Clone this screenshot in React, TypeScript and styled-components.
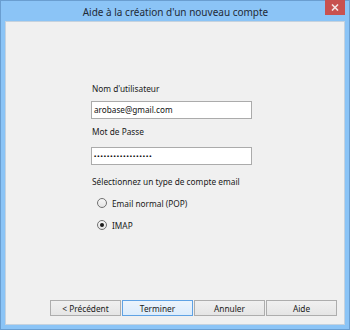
import React from "react";
import styled, { createGlobalStyle } from "styled-components";

const Global = createGlobalStyle`
  html, body { margin: 0; padding: 0; background: #ffffff; }
  * { box-sizing: border-box; }
`;

const Window = styled.div`
  width: 350px;
  height: 330px;
  border: 1px solid #6a9ed0;
  background: #8bc4f6;
  display: flex;
  flex-direction: column;
  font-family: "Noto Sans", "Open Sans", sans-serif;
`;

const TitleBar = styled.div`
  height: 20px;
  position: relative;
  display: flex;
  align-items: center;
  justify-content: center;
`;

const Title = styled.div`
  font-size: 10px;
  color: #1f2a36;
  line-height: 20px;
  margin-left: 1px;
  margin-top: 1px;
`;

const CloseButton = styled.div`
  position: absolute;
  top: -1px;
  right: 4px;
  width: 20px;
  height: 15px;
  background: #c8514f;
  display: flex;
  align-items: center;
  justify-content: center;
`;

const Content = styled.div`
  flex: 1;
  margin: 0 4px 4px 4px;
  background: #f0f0f0;
  border: 1px solid #c5d2de;
  display: flex;
  flex-direction: column;
  padding: 61px 7px 8px 85px;
`;

const Form = styled.div`
  display: flex;
  flex-direction: column;
  width: 161px;
`;

const Label = styled.div<{ $gap: number }>`
  font-size: 8.3px;
  line-height: 12px;
  height: 12px;
  color: #1a1a1a;
  margin-left: 1px;
  margin-top: ${(p) => p.$gap}px;
  white-space: nowrap;
`;

const Field = styled.div<{ $gap: number; $dots?: boolean }>`
  height: 18px;
  width: 161px;
  background: #ffffff;
  border: 1px solid #ababab;
  margin-top: ${(p) => p.$gap}px;
  padding-left: 2px;
  font-size: ${(p) => (p.$dots ? "6px" : "8.2px")};
  font-weight: ${(p) => (p.$dots ? 700 : 400)};
  letter-spacing: ${(p) => (p.$dots ? "1px" : "0")};
  line-height: 16px;
  color: #111;
  white-space: nowrap;
  overflow: hidden;
`;

const RadioRow = styled.div<{ $gap: number }>`
  display: flex;
  align-items: center;
  height: 14px;
  margin-top: ${(p) => p.$gap}px;
  padding-left: 6px;
  gap: 5px;
  font-size: 8.3px;
  color: #1a1a1a;
`;

const RadioCircle = styled.span<{ $checked?: boolean }>`
  width: 10px;
  height: 10px;
  border-radius: 50%;
  border: 1px solid #707070;
  background: linear-gradient(#f6f6f6, #e4e4e4);
  display: flex;
  align-items: center;
  justify-content: center;
  &::after {
    content: "";
    width: 4px;
    height: 4px;
    border-radius: 50%;
    background: ${(p) => (p.$checked ? "#1b1b1b" : "transparent")};
  }
`;

const ButtonRow = styled.div`
  margin-top: auto;
  display: flex;
  justify-content: flex-end;
  gap: 1px;
  margin-right: 0;
  margin-left: -42px;
`;

const Button = styled.div<{ $default?: boolean }>`
  width: 71px;
  height: 16px;
  border: 1px solid ${(p) => (p.$default ? "#5fa2e4" : "#adadad")};
  background: ${(p) =>
    p.$default
      ? "linear-gradient(#ecf4fc, #dcecfc)"
      : "linear-gradient(#f0f0f0, #e5e5e5)"};
  display: flex;
  align-items: center;
  justify-content: center;
  font-size: 8.3px;
  color: #1a1a1a;
`;

export default function App() {
  return (
    <>
      <Global />
      <Window>
        <TitleBar>
          <Title>Aide à la création d'un nouveau compte</Title>
          <CloseButton>
            <svg width="8" height="7" viewBox="0 0 8 7">
              <path d="M1 0.5 L7 6.5 M7 0.5 L1 6.5" stroke="#f4e4e4" strokeWidth="1.6" />
            </svg>
          </CloseButton>
        </TitleBar>
        <Content>
          <Form>
            <Label $gap={0}>Nom d'utilisateur</Label>
            <Field $gap={6}>arobase@gmail.com</Field>
            <Label $gap={7}>Mot de Passe</Label>
            <Field $gap={9} $dots>••••••••••••••••••</Field>
            <Label $gap={11}>Sélectionnez un type de compte email</Label>
            <RadioRow $gap={8}>
              <RadioCircle />
              <span>Email normal (POP)</span>
            </RadioRow>
            <RadioRow $gap={8}>
              <RadioCircle $checked />
              <span>IMAP</span>
            </RadioRow>
          </Form>
          <ButtonRow>
            <Button>&lt; Précédent</Button>
            <Button $default>Terminer</Button>
            <Button>Annuler</Button>
            <Button>Aide</Button>
          </ButtonRow>
        </Content>
      </Window>
    </>
  );
}
